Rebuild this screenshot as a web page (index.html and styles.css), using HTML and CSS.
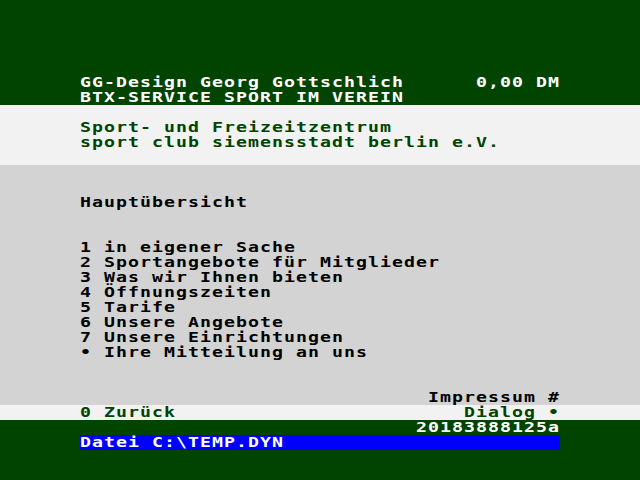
FILE: index.html
```html
<!DOCTYPE html>
<html lang="de">
<head>
<meta charset="utf-8">
<title>BTX</title>
<link rel="stylesheet" href="styles.css">
</head>
<body>
<div class="screen">
  <section class="band band-top">
    <div class="grid">
      <div class="row"></div>
      <div class="row"><span>GG-Design Georg Gottschlich</span><span>0,00 DM</span></div>
      <div class="row"><span>BTX-SERVICE SPORT IM VEREIN</span></div>
    </div>
  </section>
  <section class="band band-light">
    <div class="grid">
      <div class="row"></div>
      <div class="row"><span>Sport- und Freizeitzentrum</span></div>
      <div class="row"><span>sport club siemensstadt berlin e.V.</span></div>
      <div class="row"></div>
    </div>
  </section>
  <section class="band band-gray">
    <div class="grid">
      <div class="row"></div>
      <div class="row"></div>
      <div class="row"><span>Hauptübersicht</span></div>
      <div class="row"></div>
      <div class="row"></div>
      <div class="row"><span>1 in eigener Sache</span></div>
      <div class="row"><span>2 Sportangebote für Mitglieder</span></div>
      <div class="row"><span>3 Was wir Ihnen bieten</span></div>
      <div class="row"><span>4 Öffnungszeiten</span></div>
      <div class="row"><span>5 Tarife</span></div>
      <div class="row"><span>6 Unsere Angebote</span></div>
      <div class="row"><span>7 Unsere Einrichtungen</span></div>
      <div class="row"><span>• Ihre Mitteilung an uns</span></div>
      <div class="row"></div>
      <div class="row"></div>
      <div class="row"><span></span><span>Impressum #</span></div>
    </div>
  </section>
  <section class="band band-light">
    <div class="grid">
      <div class="row"><span>0 Zurück</span><span>Dialog •</span></div>
    </div>
  </section>
  <section class="band band-bottom">
    <div class="grid">
      <div class="row"><span></span><span>20183888125a</span></div>
      <div class="row row-status"><span>Datei C:\TEMP.DYN</span></div>
    </div>
  </section>
</div>
</body>
</html>
```
FILE: styles.css
```css
html, body {
  margin: 0;
  padding: 0;
}

body {
  width: 640px;
  height: 480px;
  overflow: hidden;
  background: #004400;
}

.screen {
  display: flex;
  flex-direction: column;
  width: 640px;
  height: 480px;
  font-family: "DejaVu Sans Mono", "Liberation Mono", monospace;
  font-weight: bold;
  font-size: 14px;
  letter-spacing: 0.802px;
}

.band {
  width: 640px;
}

.band-top {
  background: #004400;
  color: #ffffff;
  padding-top: 60px;
}

.band-light {
  background: #f2f2f2;
  color: #004400;
}

.band-gray {
  background: #d3d3d3;
  color: #000000;
}

.band-bottom {
  background: #004400;
  color: #ffffff;
  flex: 1;
}

.grid {
  width: 369.23px;
  margin-left: 80px;
  transform: scaleX(1.3);
  transform-origin: left top;
}

.row {
  display: flex;
  justify-content: space-between;
  height: 15px;
  line-height: 15px;
  white-space: pre;
}

.row-status {
  background: #0000ff;
  color: #ffffff;
}
```
